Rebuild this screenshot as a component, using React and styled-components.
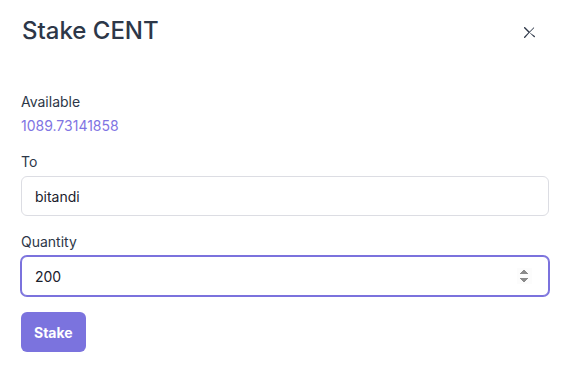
import React from 'react'
import styled, { createGlobalStyle } from 'styled-components'

const GlobalStyle = createGlobalStyle`
  body {
    margin: 0;
    background: #ffffff;
    font-family: Inter, "Noto Sans", sans-serif;
    color: #2d3748;
  }
  * { box-sizing: border-box; }
`

const Modal = styled.div`
  padding: 15px 22px 20px 21px;
`

const Header = styled.div`
  display: flex;
  justify-content: space-between;
  align-items: flex-start;
  margin-bottom: 44px;
`

const Title = styled.h2`
  margin: 0 0 0 1px;
  font-size: 24px;
  line-height: 32px;
  font-weight: 500;
  color: #2d3748;
`

const CloseButton = styled.button`
  width: 32px;
  height: 32px;
  margin: 1px 4px 0 0;
  padding: 0;
  border: none;
  border-radius: 6px;
  background: transparent;
  color: #2d3748;
  display: flex;
  align-items: center;
  justify-content: center;
  cursor: pointer;
`

const Field = styled.div`
  display: flex;
  flex-direction: column;
  gap: 4px;
  margin-bottom: 16px;
`

const Label = styled.label`
  font-size: 14px;
  line-height: 20px;
  color: #2d3748;
`

const Balance = styled.div`
  font-size: 14px;
  line-height: 20px;
  color: #7f75e3;
`

const Input = styled.input`
  width: 100%;
  height: 40px;
  padding: 0 16px 0 13px;
  font-family: inherit;
  font-size: 14px;
  color: #1a202c;
  background: #fff;
  border: 1px solid ${p => (p.$focused ? '#7b72dd' : '#dcdde3')};
  box-shadow: ${p => (p.$focused ? '0 0 0 1px #7b72dd' : 'none')};
  border-radius: 6px;
  outline: none;

  &::-webkit-inner-spin-button {
    opacity: 1;
  }
`

const Button = styled.button`
  height: 40px;
  padding: 0 13px;
  border: none;
  border-radius: 6px;
  background: #7b73de;
  color: #fff;
  font-family: inherit;
  font-size: 14px;
  font-weight: 700;
  cursor: pointer;
`

function CloseIcon() {
  return (
    <svg width="11" height="11" viewBox="0 0 24 24" fill="currentColor">
      <path d="M.439,21.44a1.5,1.5,0,0,0,2.122,2.121L11.823,12.3a.25.25,0,0,1,.354,0l9.262,9.263a1.5,1.5,0,1,0,2.122-2.121L12.3,12.177a.25.25,0,0,1,0-.354l9.263-9.262A1.5,1.5,0,0,0,21.439.44L12.177,9.7a.25.25,0,0,1-.354,0L2.561.44A1.5,1.5,0,0,0,.439,2.561L9.7,11.823a.25.25,0,0,1,0,.354Z" />
    </svg>
  )
}

function App() {
  const [to, setTo] = React.useState('bitandi')
  const [qty, setQty] = React.useState('200')

  return (
    <Modal>
      <GlobalStyle />
      <Header>
        <Title>Stake CENT</Title>
        <CloseButton aria-label="Close">
          <CloseIcon />
        </CloseButton>
      </Header>

      <Field>
        <Label>Available</Label>
        <Balance>1089.73141858</Balance>
      </Field>

      <Field>
        <Label>To</Label>
        <Input value={to} onChange={e => setTo(e.target.value)} />
      </Field>

      <Field>
        <Label>Quantity</Label>
        <Input
          type="number"
          $focused
          autoFocus
          value={qty}
          onChange={e => setQty(e.target.value)}
        />
      </Field>

      <Button>Stake</Button>
    </Modal>
  )
}

export default App
